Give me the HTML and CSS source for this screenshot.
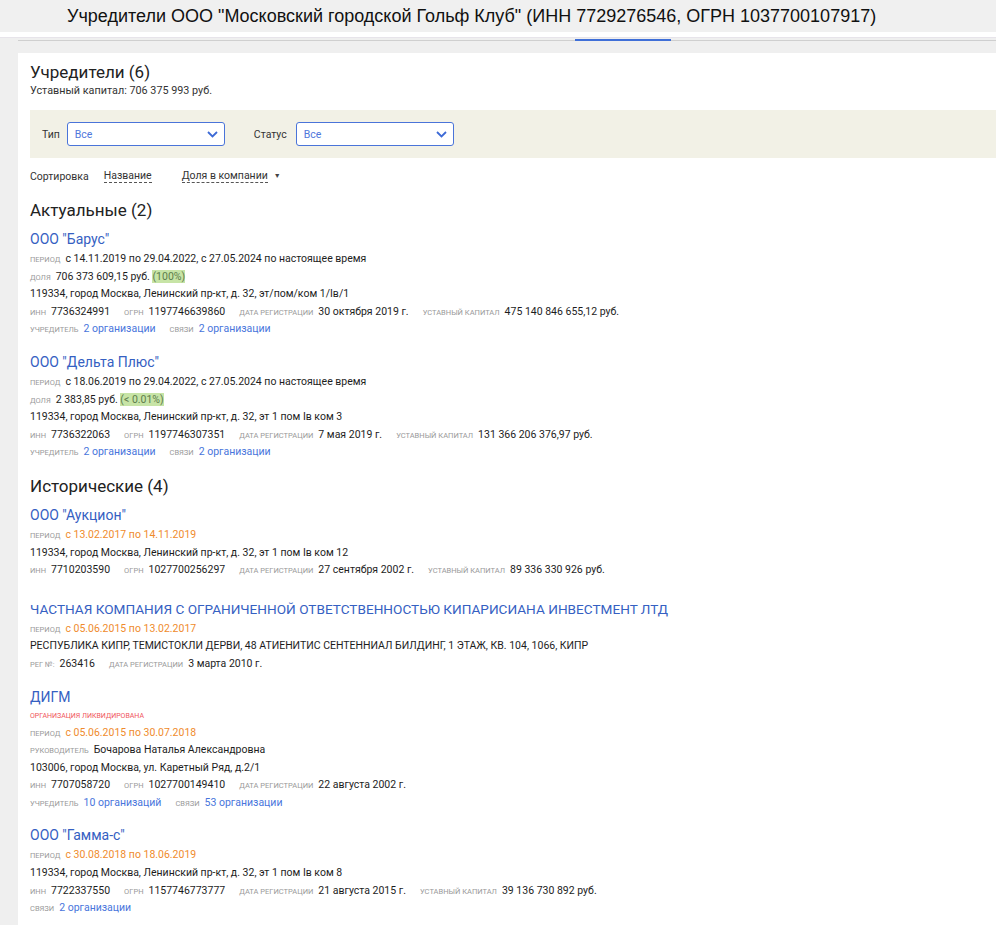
FILE: index.html
```html
<!DOCTYPE html>
<html lang="ru">
<head>
    <meta charset="UTF-8">
    <meta name="viewport" content="width=device-width, initial-scale=1.0">
    <title>Учредители</title>
    <link rel="stylesheet" href="styles.css">
</head>
<body>
    <div class="top">Учредители ООО "Московский городской Гольф Клуб" (ИНН 7729276546, ОГРН 1037700107917)</div>
    <div class="strip"></div>
    <div class="tabs"><div class="tab-active"></div></div>

    <div class="card">
        <h2 class="title">Учредители (6)</h2>
        <p class="capital">Уставный капитал: 706 375 993 руб.</p>

        <div class="filters">
            <label class="flabel">Тип</label>
            <div class="select">Все
                <svg width="11" height="7" viewBox="0 0 11 7"><path d="M1 1l4.5 4.5L10 1" fill="none" stroke="#3d6ad6" stroke-width="1.8"/></svg>
            </div>
            <label class="flabel status">Статус</label>
            <div class="select">Все
                <svg width="11" height="7" viewBox="0 0 11 7"><path d="M1 1l4.5 4.5L10 1" fill="none" stroke="#3d6ad6" stroke-width="1.8"/></svg>
            </div>
        </div>

        <div class="sort">
            <span>Сортировка</span>
            <span class="sort-link">Название</span>
            <span class="sort-link share">Доля в компании</span>
            <span class="caret">▼</span>
        </div>

        <h3 class="section">Актуальные (2)</h3>

        <div class="entry">
            <a class="name" href="#">ООО "Барус"</a>
            <div class="row"><span class="lbl">период</span>с 14.11.2019 по 29.04.2022, с 27.05.2024 по настоящее время</div>
            <div class="row"><span class="lbl">доля</span>706 373 609,15 руб. <span class="pct">(100%)</span></div>
            <div class="row">119334, город Москва, Ленинский пр-кт, д. 32, эт/пом/ком 1/Iв/1</div>
            <div class="row"><span class="lbl">инн</span><span class="val">7736324991</span><span class="lbl">огрн</span><span class="val">1197746639860</span><span class="lbl">дата регистрации</span><span class="val">30 октября 2019 г.</span><span class="lbl">уставный капитал</span>475 140 846 655,12 руб.</div>
            <div class="row"><span class="lbl">учредитель</span><a class="link" href="#">2 организации</a><span class="lbl">связи</span><a class="link" href="#">2 организации</a></div>
        </div>

        <div class="entry">
            <a class="name" href="#">ООО "Дельта Плюс"</a>
            <div class="row"><span class="lbl">период</span>с 18.06.2019 по 29.04.2022, с 27.05.2024 по настоящее время</div>
            <div class="row"><span class="lbl">доля</span>2 383,85 руб. <span class="pct">(&lt; 0.01%)</span></div>
            <div class="row">119334, город Москва, Ленинский пр-кт, д. 32, эт 1 пом Iв ком 3</div>
            <div class="row"><span class="lbl">инн</span><span class="val">7736322063</span><span class="lbl">огрн</span><span class="val">1197746307351</span><span class="lbl">дата регистрации</span><span class="val">7 мая 2019 г.</span><span class="lbl">уставный капитал</span>131 366 206 376,97 руб.</div>
            <div class="row"><span class="lbl">учредитель</span><a class="link" href="#">2 организации</a><span class="lbl">связи</span><a class="link" href="#">2 организации</a></div>
        </div>

        <h3 class="section">Исторические (4)</h3>

        <div class="entry spaced">
            <a class="name" href="#">ООО "Аукцион"</a>
            <div class="row"><span class="lbl">период</span><span class="old">с 13.02.2017 по 14.11.2019</span></div>
            <div class="row">119334, город Москва, Ленинский пр-кт, д. 32, эт 1 пом Iв ком 12</div>
            <div class="row"><span class="lbl">инн</span><span class="val">7710203590</span><span class="lbl">огрн</span><span class="val">1027700256297</span><span class="lbl">дата регистрации</span><span class="val">27 сентября 2002 г.</span><span class="lbl">уставный капитал</span>89 336 330 926 руб.</div>
        </div>

        <div class="entry">
            <a class="name caps" href="#">ЧАСТНАЯ КОМПАНИЯ С ОГРАНИЧЕННОЙ ОТВЕТСТВЕННОСТЬЮ КИПАРИСИАНА ИНВЕСТМЕНТ ЛТД</a>
            <div class="row"><span class="lbl">период</span><span class="old">с 05.06.2015 по 13.02.2017</span></div>
            <div class="row">РЕСПУБЛИКА КИПР, ТЕМИСТОКЛИ ДЕРВИ, 48 АТИЕНИТИС СЕНТЕННИАЛ БИЛДИНГ, 1 ЭТАЖ, КВ. 104, 1066, КИПР</div>
            <div class="row"><span class="lbl">рег №:</span><span class="val">263416</span><span class="lbl">дата регистрации</span>3 марта 2010 г.</div>
        </div>

        <div class="entry">
            <a class="name" href="#">ДИГМ</a>
            <div class="closed">организация ликвидирована</div>
            <div class="row"><span class="lbl">период</span><span class="old">с 05.06.2015 по 30.07.2018</span></div>
            <div class="row"><span class="lbl">руководитель</span>Бочарова Наталья Александровна</div>
            <div class="row">103006, город Москва, ул. Каретный Ряд, д.2/1</div>
            <div class="row"><span class="lbl">инн</span><span class="val">7707058720</span><span class="lbl">огрн</span><span class="val">1027700149410</span><span class="lbl">дата регистрации</span>22 августа 2002 г.</div>
            <div class="row"><span class="lbl">учредитель</span><a class="link" href="#">10 организаций</a><span class="lbl">связи</span><a class="link" href="#">53 организации</a></div>
        </div>

        <div class="entry">
            <a class="name" href="#">ООО "Гамма-с"</a>
            <div class="row"><span class="lbl">период</span><span class="old">с 30.08.2018 по 18.06.2019</span></div>
            <div class="row">119334, город Москва, Ленинский пр-кт, д. 32, эт 1 пом Iв ком 8</div>
            <div class="row"><span class="lbl">инн</span><span class="val">7722337550</span><span class="lbl">огрн</span><span class="val">1157746773777</span><span class="lbl">дата регистрации</span><span class="val">21 августа 2015 г.</span><span class="lbl">уставный капитал</span>39 136 730 892 руб.</div>
            <div class="row"><span class="lbl">связи</span><a class="link" href="#">2 организации</a></div>
        </div>
    </div>
</body>
</html>
```

FILE: styles.css
```css
*{
    padding: 0;
    margin: 0;
    box-sizing: border-box;
}

body{
    background-color: #efefef;
    font-family: Roboto, "Noto Sans", sans-serif;
    color: #222;
    overflow: hidden;
}

.top{
    height: 32px;
    line-height: 32px;
    padding-left: 67px;
    background-color: #f0f0f0;
    font-family: "Liberation Sans", Arial, sans-serif;
    font-size: 18px;
    color: #111;
    white-space: nowrap;
}

.strip{
    height: 6px;
    background-color: #fff;
    border-bottom: 1px solid #e7e4ea;
}

.tabs{
    margin: 1px 0 0 18px;
    height: 2px;
    border-bottom: 1px solid #cfcfcf;
}

.tab-active{
    margin-left: 557px;
    width: 96px;
    height: 2px;
    background-color: #3f6fd8;
}

.card{
    margin: 12px 0 0 18px;
    padding: 7px 0 40px 12px;
    background-color: #fff;
    min-height: 880px;
}

.title{
    font-size: 17px;
    font-weight: 400;
    line-height: 24px;
    color: #222;
}

.capital{
    font-size: 10.8px;
    line-height: 14px;
    color: #333;
}

.filters{
    margin-top: 12px;
    height: 48px;
    padding: 12px;
    display: flex;
    align-items: center;
    background-color: #f2f1e6;
}

.flabel{
    font-size: 10.5px;
    color: #333;
    margin-right: 7px;
}

.flabel.status{
    margin-left: 29px;
    margin-right: 9px;
}

.select{
    width: 158px;
    height: 24px;
    display: flex;
    align-items: center;
    justify-content: space-between;
    padding: 0 6px 0 7px;
    background-color: #fff;
    border: 1px solid #4a74d9;
    border-radius: 3px;
    font-size: 10.5px;
    color: #4f77dc;
}

.sort{
    margin-top: 9px;
    display: flex;
    align-items: center;
    height: 18px;
    font-size: 10.5px;
    color: #333;
}

.sort-link{
    margin-left: 15px;
    line-height: 12px;
    border-bottom: 1px dashed #555;
}

.sort-link.share{
    margin-left: 30px;
}

.caret{
    margin-left: 6px;
    font-size: 7px;
    color: #444;
}

.section{
    margin-top: 13px;
    font-size: 17px;
    font-weight: 400;
    line-height: 24px;
    color: #222;
}

.entry{
    margin-top: 6px;
    margin-bottom: 13px;
}

.entry + .entry{
    margin-top: 0;
}

.entry.spaced{
    margin-bottom: 19px;
}

.name{
    display: block;
    font-size: 14px;
    line-height: 22px;
    color: #3560c2;
    text-decoration: none;
}

.name.caps{
    font-size: 13.6px;
}

.row{
    font-size: 10.5px;
    line-height: 17.6px;
    height: 17.6px;
    color: #1d1d1d;
    white-space: nowrap;
}

.lbl{
    font-size: 7.5px;
    line-height: 8px;
    text-transform: uppercase;
    color: #999;
    margin-right: 5px;
}

.val{
    margin-right: 14px;
}

.link{
    color: #4875dc;
    text-decoration: none;
    margin-right: 14px;
}

.pct{
    background-color: #c7e4a6;
    color: #5d7c4c;
}

.old{
    color: #ef8b2c;
}

.closed{
    font-size: 7px;
    line-height: 16px;
    text-transform: uppercase;
    color: #f0555c;
}
```
